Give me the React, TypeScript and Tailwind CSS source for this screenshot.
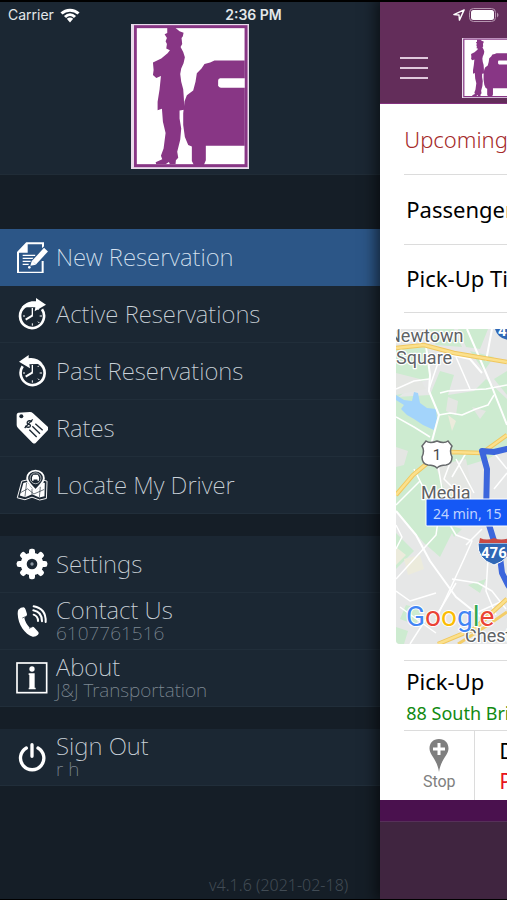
import type { ReactNode } from "react";

interface MenuEntry {
  label: string;
  detail?: string;
  icon: ReactNode;
  active?: boolean;
}

function ChauffeurLogo({ className }: { className: string }) {
  return (
    <svg viewBox="394 72 356 436" className={className} role="img" aria-label="J&J Transportation">
      <rect x="394" y="72" width="356" height="436" fill="#e9dcec" />
      <rect x="400" y="76" width="344" height="426" fill="#fff" />
      <rect x="407" y="80" width="333" height="418" fill="#fff" stroke="#883685" strokeWidth="9" />
      <path
        fill="#883685"
        d="M503 84 L528 84 L540 94 L552 98 L550 109 L546 114 L548 132 L543 141 L551 156 L556 172 L552 190 L545 206 L542 222 L545 246 L551 268 L553 296 L554 330 L540 332 L540 356 L545 386 L542 420 L533 456 L536 474 L529 482 L528 493 L511 494 L508 487 L498 494 L470 494 L468 488 L488 479 L484 468 L492 446 L498 400 L490 366 L487 327 L474 331 L474 306 L480 268 L484 228 L470 234 L460 225 L462 210 L460 188 L485 176 L504 160 L511 151 L500 146 L502 132 L498 124 L502 114 L495 103 L503 99 Z"
      />
      <path
        fill="#883685"
        d="M736 182 H645 L632 188 L615 192 L606 206 L592 220 L588 246 L581 272 L562 286 L555 304 L551 340 L551 376 L556 412 L566 436 L577 440 L577 484 L583 496 H613 L619 482 V438 H736 Z"
      />
      <path fill="#fff" d="M736 235 H662 Q656 236 656 243 V256 Q657 263 664 264 H736 Z" />
    </svg>
  );
}

function NewReservationIcon() {
  return (
    <svg viewBox="48 62 96 96" className="size-8 shrink-0" fill="none" aria-hidden="true">
      <path d="M129 92 V69 H80 L54 96 V157 H128 V122" stroke="#fff" strokeWidth="6" />
      <path d="M83 67 V97 H52 Z" fill="#fff" />
      <path d="M68 105 H106 M68 114 H100 M68 123 H92 M68 132 H86" stroke="#fff" strokeWidth="4" />
      <path d="M139 86 L103 126" stroke="#2c5687" strokeWidth="22" />
      <path d="M138 88 L102 127" stroke="#fff" strokeWidth="16" strokeLinejoin="round" />
      <path d="M96 120 L108 133 L91 136 Z" fill="#fff" />
      <circle cx="88" cy="141" r="4" fill="#fff" />
    </svg>
  );
}

function ClockIcon({ back }: { back?: boolean }) {
  return (
    <svg viewBox="48 236 96 96" className="size-8 shrink-0" fill="none" stroke="#fff" aria-hidden="true">
      {back ? (
        <>
          <path d="M68 270 A36 36 0 1 0 90 255 C104 252 116 256 124 266" strokeWidth="8" />
          <path d="M57 256 L86 236 V246 C104 243 118 250 128 262 L88 264 L90 276 Z" fill="#fff" stroke="none" />
        </>
      ) : (
        <>
          <path d="M126 270 A36 36 0 1 1 104 255 C90 252 78 256 70 266" strokeWidth="8" />
          <path d="M138 256 L108 236 V246 C90 243 74 252 64 264 L106 264 L104 276 Z" fill="#fff" stroke="none" />
        </>
      )}
      <path d="M97 266 V289" strokeWidth="4" />
      <path d="M98 288 L77 301" strokeWidth="6" />
      <path d="M97 312 V319 M119 290 H126 M69 290 H75 M114 307 L118 311 M113 272 L117 268" strokeWidth="3" />
    </svg>
  );
}

function RatesIcon() {
  return (
    <svg viewBox="48 202 96 96" className="size-8 shrink-0" fill="none" stroke="#1b2733" aria-hidden="true">
      <path
        d="M55 204 L90 202 Q95 202 99 206 L144 247 Q148 252 144 256 L107 295 Q103 298 98 295 L54 250 Q50 246 50 241 V210 Q50 205 55 204 Z"
        fill="#fff"
        stroke="none"
      />
      <circle cx="64" cy="215" r="6" fill="#1b2733" stroke="none" />
      <path d="M96 231 Q86 225 82 232 Q80 238 87 239 Q94 241 90 246 Q84 251 76 243 M98 224 L74 250" strokeWidth="4" />
      <path d="M106 237 L128 257 M97 245 L120 267 M88 255 L110 277" strokeWidth="4" />
    </svg>
  );
}

function LocateIcon() {
  return (
    <svg viewBox="48 372 100 96" className="size-8 shrink-0" fill="none" stroke="#fff" aria-hidden="true">
      <path d="M84 404 L66 408 L52 460 L76 466 L98 458 L122 467 L143 462 L145 408 L134 405" strokeWidth="3" />
      <path d="M84 411 L71 414 L60 453 L77 458 L98 449 L121 459 L137 455 L138 414 L132 412 L122 426 L110 438 L96 428 Z" fill="#fff" stroke="none" />
      <path d="M81 414 L76 457 M98 432 V449 M124 426 L121 458 M62 444 L84 432 L104 448 L136 434" stroke="#1b2733" strokeWidth="2" />
      <path
        d="M109 375 C93 375 83 386 83 399 C83 412 97 422 109 437 C121 422 135 412 135 399 C135 386 125 375 109 375 Z"
        fill="#1b2733"
        strokeWidth="6"
      />
      <circle cx="109" cy="399" r="17" strokeWidth="2" />
      <path d="M98 396 L102 388 H116 L120 396 V407 H115 V403 H103 V407 H98 Z" fill="#fff" stroke="none" />
    </svg>
  );
}

function SettingsIcon() {
  return (
    <svg viewBox="49 55 96 96" className="size-8 shrink-0" aria-hidden="true">
      <g fill="#fff">
        {[0, 45, 90, 135].map((angle) => (
          <rect key={angle} x="88" y="57" width="18" height="92" rx="7" transform={`rotate(${angle} 97 103)`} />
        ))}
        <circle cx="97" cy="103" r="34" />
      </g>
      <circle cx="97" cy="103" r="16" fill="#1b2733" />
      <circle cx="97" cy="103" r="5" fill="#8b96a1" />
    </svg>
  );
}

function ContactIcon() {
  return (
    <svg viewBox="49 224 96 96" className="size-8 shrink-0" fill="none" stroke="#fff" aria-hidden="true">
      <path
        d="M56 238 Q63 231 72 231 Q76 232 78 238 L82 251 Q83 256 78 259 L74 262 Q76 276 90 292 L96 290 Q101 288 105 293 L116 305 Q119 309 115 313 Q108 320 99 319 C76 312 55 283 54 250 Q54 242 56 238 Z"
        fill="#fff"
        stroke="none"
      />
      <path d="M68 263 L82 257 M88 294 L99 289" stroke="#1b2733" strokeWidth="2" />
      <path
        d="M102 253 C110 256 115 263 115 272 M101 240 C118 243 127 255 127 273 M102 228 C126 232 139 249 138 275"
        strokeWidth="6"
        strokeLinecap="round"
      />
    </svg>
  );
}

function AboutIcon() {
  return (
    <svg viewBox="50 397 96 96" className="size-8 shrink-0" aria-hidden="true">
      <rect x="53" y="400" width="89" height="89" fill="none" stroke="#fff" strokeWidth="5" />
      <circle cx="98" cy="418" r="8" fill="#fff" />
      <path d="M88 431 H106 V474 H109 V479 H88 V474 H90 V436 H88 Z" fill="#fff" />
    </svg>
  );
}

function PowerIcon() {
  return (
    <svg viewBox="49 122 96 96" className="size-8 shrink-0" fill="none" stroke="#fff" strokeWidth="10" strokeLinecap="round" aria-hidden="true">
      <path d="M80 143 A35 35 0 1 0 115 143 M97 133 V168" />
    </svg>
  );
}

const reservationEntries: MenuEntry[] = [
  { label: "New Reservation", icon: <NewReservationIcon />, active: true },
  { label: "Active Reservations", icon: <ClockIcon /> },
  { label: "Past Reservations", icon: <ClockIcon back /> },
  { label: "Rates", icon: <RatesIcon /> },
  { label: "Locate My Driver", icon: <LocateIcon /> },
];

const accountEntries: MenuEntry[] = [
  { label: "Settings", icon: <SettingsIcon /> },
  { label: "Contact Us", detail: "6107761516", icon: <ContactIcon /> },
  { label: "About", detail: "J&J Transportation", icon: <AboutIcon /> },
];

const sessionEntries: MenuEntry[] = [{ label: "Sign Out", detail: "r h", icon: <PowerIcon /> }];

function MenuGroup({ entries }: { entries: MenuEntry[] }) {
  return (
    <ul>
      {entries.map((entry) => (
        <li key={entry.label}>
          <button
            className={`flex h-[57px] w-full items-center gap-2 border-b px-4 text-left ${
              entry.active ? "border-[#2c5687] bg-[#2c5687]" : "border-[#212e3a] bg-[#1b2733]"
            }`}
          >
            {entry.icon}
            <span className="flex flex-col">
              <span className={`text-2xl leading-6 font-extralight ${entry.active ? "text-[#d8e3f0]" : "text-[#cbd3da]"}`}>
                {entry.label}
              </span>
              {entry.detail && <span className="text-[19px] leading-[22px] font-extralight text-[#7f8a94]">{entry.detail}</span>}
            </span>
          </button>
        </li>
      ))}
    </ul>
  );
}

function StatusBar() {
  return (
    <div className="absolute inset-x-0 top-0 z-20 grid h-7 grid-cols-3 items-center border-t-2 border-black px-2 font-['Inter',sans-serif] text-sm text-[#e3e7ea]">
      <div className="flex items-center gap-1.5">
        <span>Carrier</span>
        <svg viewBox="0 0 20 15" className="w-5" fill="none" stroke="#fff" strokeWidth="3" aria-hidden="true">
          <path d="M1.5 5.5 C6 1 14 1 18.500 5.500 M5 9 C8 6 12 6 15 9" />
          <path d="M6.800 10.800 Q10 8 13.200 10.800 L10 14.500 Z" fill="#fff" stroke="none" />
        </svg>
      </div>
      <span className="text-center font-semibold">2:36 PM</span>
      <div className="flex items-center justify-end gap-1">
        <svg viewBox="0 0 14 14" className="w-3" fill="none" stroke="#fff" strokeWidth="1.600" strokeLinejoin="round" aria-hidden="true">
          <path d="M13 1 L1 6.500 L7 7 L7.500 13 Z" />
        </svg>
        <svg viewBox="0 0 30 14" className="w-[30px]" aria-hidden="true">
          <rect x="0.500" y="0.500" width="26" height="13" rx="4" fill="none" stroke="#b697b1" />
          <rect x="2" y="2" width="23" height="10" rx="2.500" fill="#fff" />
          <path d="M28 4.500 Q31 7 28 9.500 Z" fill="#b697b1" />
        </svg>
      </div>
    </div>
  );
}

function RouteMap() {
  return (
    <svg
      viewBox="0 0 111 315"
      preserveAspectRatio="xMinYMin slice"
      className="h-[315px] w-full rounded-l"
      fill="none"
      role="img"
      aria-label="Route map"
    >
      <rect width="300" height="315" fill="#e6e7e7" />
      {/* parks */}
      <g fill="#cdebd0">
        <path d="M0 18 L32 18 L34 50 L20 54 L0 70 Z M28 0 H58 L66 18 L40 16 Z M62 0 H92 L84 20 L70 18 Z" />
        <path d="M0 68 L34 66 L44 42 L58 46 L52 66 L78 62 L90 50 L111 70 V118 L92 130 L66 138 L56 170 L30 180 L0 160 Z" />
        <path d="M74 22 L98 28 L88 42 Z M98 50 L111 42 V66 Z" />
        <path d="M0 150 L48 168 L60 196 L44 228 L28 214 L0 182 Z M0 204 L18 222 L0 240 Z" />
        <path d="M72 256 L90 250 L84 264 Z M10 276 L26 280 L20 296 L4 290 Z M52 196 L66 200 L58 208 Z M0 298 L12 302 L8 315 H0 Z" />
      </g>
      <g fill="#e4e6e3">
        <path d="M52 68 L62 72 L60 86 L50 82 Z M40 138 L52 134 L70 130 L76 160 L62 170 L48 160 Z M0 44 L24 50 L30 60 L0 66 Z" />
        <path d="M76 78 L90 82 L84 90 Z M0 118 L12 122 L8 136 L0 138 Z" />
      </g>
      <path fill="#ecebdc" d="M8 230 L24 226 L28 240 L12 246 Z M52 86 L60 92 L56 102 Z M0 218 L10 226 L0 236 Z" />
      <path
        fill="#a3d4fb"
        d="M0 66 L8 71 L16 72 L18 63 L22 64 L24 74 L31 79 L40 80 L41 90 L38 101 L27 96 L18 90 L11 86 L5 80 L8 76 L0 71 Z"
      />
      {/* side streets */}
      <g stroke="#fff" strokeWidth="1.500" strokeLinejoin="round">
        <path d="M30 17 L34 46 L33 62 L43 86 L36 112 L38 124" strokeWidth="2" />
        <path d="M71 0 L84 30 L96 58 L111 96 M96 0 L90 32 M56 26 L74 30 L86 44" strokeWidth="2" />
        <path d="M0 60 L18 52 L33 50 M44 64 L52 62 L90 60 L111 56 M43 86 L54 84 L66 86 L80 80 L92 76 L98 66" />
        <path d="M44 28 L33 60 M60 28 L74 60 M0 88 L18 98 L34 108" />
        <path d="M42 136 L46 160 M54 134 L48 150 L66 168 M70 124 L56 148 M98 124 L111 140 M111 144 L98 160 M60 130 L78 164" />
        <path d="M0 182 L20 206 L34 232 L60 268 L90 292" strokeWidth="2" />
        <path d="M28 160 L18 140 M24 152 L0 176 M42 192 L40 206 L20 228 L0 250 M54 196 L60 206 L76 212 L68 230 L56 256 L40 290" />
        <path d="M56 250 L82 254 L96 262 L110 280 M42 284 L60 254 M0 262 L14 272 L40 264 M4 278 L26 294 L40 304 M86 200 L70 216" />
        <path d="M92 230 L90 262 L100 286 M111 270 L80 284 M14 315 L30 290 M0 196 L6 208 L0 220" />
      </g>
      {/* highways */}
      <g stroke="#f0c75e" strokeWidth="4.500">
        <path d="M0 19 L28 16 L58 24 L111 33 M40 124 L54 123 L86 124 L111 106 M34 132 L17 146 L0 166 M42 315 L78 300 L111 270" />
      </g>
      <g stroke="#fbe08c" strokeWidth="2.500">
        <path d="M0 19 L28 16 L58 24 L111 33 M40 124 L54 123 L86 124 L111 106 M34 132 L17 146 L0 166 M42 315 L78 300 L111 270" />
      </g>
      <path d="M111 283 L92 296 L62 315" stroke="#f3cd69" strokeWidth="3" />
      {/* route */}
      <path
        d="M300 118 L111 120 L98 123 L86 122 L91 140 L90 186 L98 212 M104 228 L106 244 L112 256 L130 280"
        stroke="#3c66dc"
        strokeWidth="6"
        strokeLinejoin="round"
      />
      <g
        className="font-['Roboto',sans-serif]"
        fontSize="18"
        fill="#5e6265"
        stroke="#fff"
        strokeWidth="2.500"
        paintOrder="stroke"
        strokeLinejoin="round"
      >
        <text x="-8" y="13">Newtown</text>
        <text x="0" y="35">Square</text>
        <text x="25" y="170">Media</text>
        <text x="69" y="313">Chester</text>
      </g>
      {/* US 1 shield */}
      <path
        d="M30 112 Q34 115 41 112 Q48 115 52 112 L56 117 Q53 122 56 128 Q56 135 50 136 Q44 136 41 139 Q38 136 32 136 Q26 135 26 128 Q29 122 26 117 Z"
        fill="#fff"
        stroke="#676a6c"
        strokeWidth="1.500"
      />
      <text x="41" y="131" textAnchor="middle" fontSize="15" fill="#45484a" className="font-['Roboto',sans-serif]">1</text>
      {/* interstate shields */}
      <path d="M98 -6 H126 Q126 10 112 11 Q99 9 98 -6 Z" fill="#2f67b5" />
      <text x="102" y="7" fontSize="15" fontWeight="700" fill="#fff" className="font-['Roboto',sans-serif]">476</text>
      <path d="M82 214 H115 Q116 230 98 236 Q81 230 82 214 Z" fill="#2f67b5" stroke="#fff" />
      <path d="M84 209 Q91 212 98 209 Q105 212 114 209 V214 H83 Z" fill="#c94b45" />
      <text x="85" y="229" fontSize="15" fontWeight="700" fill="#fff" className="font-['Roboto',sans-serif]">476</text>
      <rect x="30" y="170" width="120" height="27" rx="1" fill="#1558f5" stroke="#fff" />
      <text x="37" y="190" fontSize="14" fill="#bfd2ff" className="font-['Noto_Sans',sans-serif]">24 min, 15</text>
      <text
        x="10"
        y="297"
        fontSize="28"
        stroke="#fff"
        strokeWidth="2"
        paintOrder="stroke"
        className="font-['Roboto',sans-serif]"
      >
        <tspan fill="#4285f4">G</tspan>
        <tspan fill="#ea4335">o</tspan>
        <tspan fill="#fbbc05">o</tspan>
        <tspan fill="#4285f4">g</tspan>
        <tspan fill="#34a853">l</tspan>
        <tspan fill="#ea4335">e</tspan>
      </text>
    </svg>
  );
}

function SideMenu() {
  return (
    <nav className="flex w-3/4 shrink-0 flex-col bg-[#151e27]">
      <div className="flex h-[175px] items-end justify-center border-b border-[#202c37] bg-[#1b2733] pb-[5px]">
        <ChauffeurLogo className="h-[145px]" />
      </div>
      <div className="flex flex-col gap-[22px] pt-[54px]">
        <MenuGroup entries={reservationEntries} />
        <MenuGroup entries={accountEntries} />
        <MenuGroup entries={sessionEntries} />
      </div>
      <p className="mt-auto pr-8 pb-0.5 text-right leading-6 font-light text-[#414b54]">v4.1.6 (2021-02-18)</p>
    </nav>
  );
}

function TripPage() {
  return (
    <main className="relative z-10 flex min-w-0 flex-1 flex-col overflow-hidden bg-[#402540] whitespace-nowrap shadow-[-2px_0_14px_2px_rgba(0,0,0,0.6)]">
      <header className="flex h-[104px] items-end gap-[34px] border-b border-[#84317f] bg-[#632d5a] pb-[5px] pl-5">
        <button className="flex h-[60px] w-7 shrink-0 flex-col justify-center gap-2" aria-label="Menu">
          <span className="h-0.5 w-full bg-[#dfc8dc]" />
          <span className="h-0.5 w-full bg-[#dfc8dc]" />
          <span className="h-0.5 w-full bg-[#dfc8dc]" />
        </button>
        <ChauffeurLogo className="h-[60px] shrink-0" />
      </header>
      <section className="bg-white">
        <div className="pl-6 text-[22px] text-black">
          <h1 className="flex h-[71px] items-center border-b border-[#dcdcdc] font-light text-[#a52a2a]">Upcoming</h1>
          <p className="flex h-[70px] items-center border-b border-[#dcdcdc] pl-0.5">Passenger</p>
          <p className="flex h-[68px] items-center border-b border-[#dcdcdc] pl-0.5">Pick-Up Time</p>
        </div>
        <div className="py-4 pl-4">
          <RouteMap />
        </div>
        <div className="ml-6 h-[70px] border-t border-[#dcdcdc] pt-1 pl-0.5">
          <p className="text-[22px] leading-8 text-black">Pick-Up</p>
          <p className="text-lg leading-8 text-[#128a12]">88 South Bridge</p>
        </div>
        <div className="ml-6 flex h-[70px] border-t border-[#dcdcdc]">
          <button className="flex w-[71px] shrink-0 flex-col items-center border-r border-[#dcdcdc] pt-2 text-base leading-5 text-[#808080]">
            <svg viewBox="0 0 20 33" className="h-[33px]" aria-hidden="true">
              <path d="M10 0 C4 0 0.500 4 0.500 9.500 C0.500 16 8 20 10 33 C12 20 19.500 16 19.500 9.500 C19.500 4 16 0 10 0 Z" fill="#7f7f7f" />
              <path d="M10 4 V16 M4 10 H16" stroke="#fff" strokeWidth="3" />
            </svg>
            <span className="font-['Roboto',sans-serif]">Stop</span>
          </button>
          <div className="pt-1 pl-6 text-[22px] leading-[30px]">
            <p className="text-black">Drop-Off</p>
            <p className="text-[#e8131b]">Philadelphia</p>
          </div>
        </div>
      </section>
      <div className="h-[22px] border-b border-[#563059] bg-[#4a114e]" />
    </main>
  );
}

export default function App() {
  return (
    <div className="relative flex min-h-screen overflow-hidden border-b border-black bg-[#151e27] font-['Noto_Sans',sans-serif]">
      <StatusBar />
      <SideMenu />
      <TripPage />
    </div>
  );
}
